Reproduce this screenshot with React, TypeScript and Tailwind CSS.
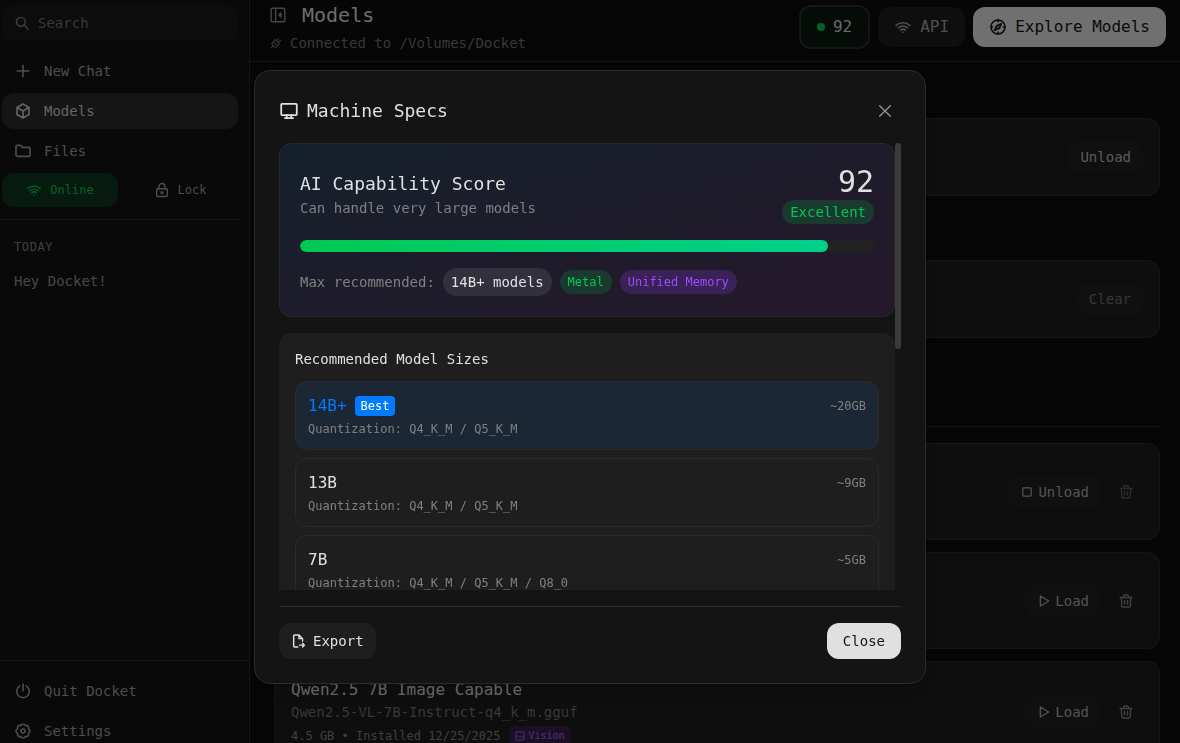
import type { ReactNode } from 'react';

type IconProps = { className?: string; children?: ReactNode };

function Icon({ className = 'size-4', children }: IconProps) {
  return (
    <svg
      viewBox="-1.5 -1.5 27 27"
      fill="none"
      stroke="currentColor"
      strokeWidth="2.4"
      strokeLinecap="round"
      strokeLinejoin="round"
      aria-hidden="true"
      className={`shrink-0 ${className}`}
    >
      {children}
    </svg>
  );
}

function WifiIcon({ className }: IconProps) {
  return (
    <Icon className={className}>
      <path d="M1.5 9.5c6-5.300 15-5.300 21 0" />
      <path d="M5 13.200c4-3.600 10-3.600 14 0" />
      <path d="M8.500 16.700c2-1.800 5-1.800 7 0" />
      <path d="M12 20h.01" />
    </Icon>
  );
}

function TrashIcon({ className }: IconProps) {
  return (
    <Icon className={className}>
      <path d="M2 6h20M4 6l1 14.500a1.500 1.500 0 0 0 1.500 1.500h11a1.500 1.500 0 0 0 1.500-1.500L20 6M8 6V3.500A1.500 1.500 0 0 1 9.500 2h5A1.500 1.500 0 0 1 16 3.500V6M9.500 11v6M14.500 11v6" />
    </Icon>
  );
}

function PlayIcon() {
  return (
    <Icon className="size-3.5">
      <path d="M5 2.500v19L21 12z" />
    </Icon>
  );
}

const navButton =
  'flex h-9 w-full shrink-0 items-center gap-3 rounded-xl px-3 text-sm text-[#9a9a9a]';

function Sidebar() {
  return (
    <aside className="flex w-[250px] shrink-0 flex-col border-r border-[#2a2a2a] bg-[#121212]">
      <div className="flex flex-col pt-[5px] pr-[11px] pl-0.5">
        <label className="flex h-9 items-center gap-2 rounded-xl bg-[#181818] px-3 text-[#808080]">
          <Icon>
            <circle cx="10" cy="10" r="7.500" />
            <path d="m15.500 15.500 7 7" />
          </Icon>
          <input
            type="text"
            aria-label="Search"
            placeholder="Search"
            className="w-full min-w-0 bg-transparent text-sm outline-none placeholder:text-[#707070]"
          />
        </label>

        <nav className="mt-3 flex flex-col gap-1">
          <button type="button" className={navButton}>
            <Icon className="size-[18px]">
              <path d="M12 3.500v17M3.500 12h17" />
            </Icon>
            New Chat
          </button>
          <button type="button" className={`${navButton} bg-[#2a2a2a] text-[#c8c8c8]`}>
            <Icon className="size-[18px]">
              <path d="m12 1.500 9 5.200v10.600L12 22.500l-9-5.200V6.700zM3 6.700l9 5.300 9-5.300M12 12v10.500" />
            </Icon>
            Models
          </button>
          <button type="button" className={navButton}>
            <Icon className="size-[18px]">
              <path d="M1.500 5A1.500 1.500 0 0 1 3 3.500h5.500L11.500 6.500H21A1.500 1.500 0 0 1 22.500 8v10.500A1.500 1.500 0 0 1 21 20H3a1.500 1.500 0 0 1-1.500-1.500z" />
            </Icon>
            Files
          </button>
        </nav>

        <div className="mt-1 flex gap-1">
          <button
            type="button"
            className="flex h-[34px] flex-1 items-center justify-center gap-2 rounded-xl bg-[#0d3520] text-xs text-[#00c950]"
          >
            <WifiIcon />
            Online
          </button>
          <button
            type="button"
            className="flex h-[34px] flex-1 items-center justify-center gap-2 rounded-xl text-xs text-[#9a9a9a]"
          >
            <Icon>
              <rect x="3" y="10" width="18" height="13" rx="2" />
              <path d="M7 10V6a5 5 0 0 1 10 0v4" />
              <circle cx="12" cy="16.500" r="1.500" />
            </Icon>
            Lock
          </button>
        </div>

        <div className="mt-3 border-t border-[#2a2a2a]" />
        <h2 className="mt-[19px] px-3 text-xs tracking-wider text-[#808080]">TODAY</h2>
        <a href="#chat" className="mt-4 px-3 text-sm text-[#909090]">
          Hey Docket!
        </a>
      </div>

      <div className="mt-auto -mb-1.5 flex flex-col gap-1 border-t border-[#2a2a2a] pt-3 pl-0.5">
        <button type="button" className={navButton}>
          <Icon className="size-[18px]">
            <path d="M12 1.500V12M7 4.500a9.500 9.500 0 1 0 10 0" />
          </Icon>
          Quit Docket
        </button>
        <button type="button" className={navButton}>
          <Icon className="size-[18px]">
            <path d="M15.400 3.900A3.600 3.600 0 0 1 20.100 8.600A3.600 3.600 0 0 1 20.100 15.400A3.600 3.600 0 0 1 15.400 20.100A3.600 3.600 0 0 1 8.600 20.100A3.600 3.600 0 0 1 3.900 15.400A3.600 3.600 0 0 1 3.900 8.600A3.600 3.600 0 0 1 8.600 3.900A3.600 3.600 0 0 1 15.400 3.900z" />
            <circle cx="12" cy="12" r="3" />
          </Icon>
          Settings
        </button>
      </div>
    </aside>
  );
}

function Header() {
  return (
    <header className="flex shrink-0 items-center justify-between border-b border-[#2a2a2a] pt-px pr-3.5 pb-2 pl-5">
      <div>
        <div className="flex items-center gap-4">
          <button type="button" aria-label="Collapse sidebar" className="text-[#8a8a8a]">
            <Icon className="size-4">
              <rect x=".5" y=".5" width="23" height="23" rx="2" />
              <path d="M8 .5v23" />
              <path d="M17 8.500v7L13.500 12z" fill="currentColor" />
            </Icon>
          </button>
          <h1 className="text-xl text-[#d8d8d8]">Models</h1>
        </div>
        <p className="mt-1 flex items-center gap-2 text-sm text-[#707070]">
          <Icon className="size-3">
            <path d="M1 23l5.500-5.500M6 9l9 9-1.500 1.500a5 5 0 0 1-7 0l-2-2a5 5 0 0 1 0-7zM6 9l4.500-4.500L19.500 13.500 15 18M13 7l5-5M17 11l5-5" />
          </Icon>
          Connected to /Volumes/Docket
        </p>
      </div>

      <div className="flex items-center gap-2">
        <button
          type="button"
          className="flex h-11 items-center gap-2 rounded-xl border-2 border-[#2a2a2a] bg-[#0a180f] px-4 text-[#d0d0d0]"
        >
          <span className="size-2 rounded-full bg-[#00c950]" />
          92
        </button>
        <button
          type="button"
          className="flex h-10 items-center gap-2 rounded-xl bg-[#1c1c1c] px-4 text-[#a0a0a0]"
        >
          <WifiIcon className="size-[18px]" />
          API
        </button>
        <button
          type="button"
          className="flex h-10 items-center gap-2 rounded-xl bg-[#e0e0e0] px-4 text-[#141414]"
        >
          <Icon className="size-[18px]">
            <circle cx="12" cy="12" r="10.500" />
            <path d="m17 7-3 7-7 3 3-7zM12 1.500v2.500M12 20v2.500M1.500 12H4M20 12h2.500M12 12h.01" />
          </Icon>
          Explore Models
        </button>
      </div>
    </header>
  );
}

const card =
  'flex shrink-0 items-center justify-end gap-2 rounded-xl border border-[#2a2a2a] bg-[#1c1c1c] px-4';
const cardButton = 'flex h-8 items-center gap-1 rounded-xl bg-[#202020] px-3 text-sm';

function DeleteButton({ disabled = false }: { disabled?: boolean }) {
  return (
    <button
      type="button"
      aria-label="Delete model"
      disabled={disabled}
      className="flex h-8 w-[34px] items-center justify-center text-[#808080] disabled:opacity-60"
    >
      <TrashIcon />
    </button>
  );
}

function ModelList() {
  return (
    <main className="flex min-h-0 flex-1 flex-col overflow-hidden pt-14 pr-5 pl-6">
      <section className={`${card} h-[78px]`}>
        <button type="button" className={`${cardButton} text-[#b8b8b8]`}>
          Unload
        </button>
      </section>
      <section className={`${card} mt-16 h-[78px]`}>
        <button type="button" disabled className={`${cardButton} text-[#707070]`}>
          Clear
        </button>
      </section>

      <div className="mt-[88px] flex shrink-0 flex-col gap-3 border-t border-[#2a2a2a] pt-4">
        <section className={`${card} h-[97px]`}>
          <button type="button" className={`${cardButton} text-[#a8a8a8]`}>
            <Icon className="size-3.5">
              <rect x="4" y="4" width="16" height="16" rx="1.500" />
            </Icon>
            Unload
          </button>
          <DeleteButton disabled />
        </section>
        <section className={`${card} h-[97px]`}>
          <button type="button" className={`${cardButton} text-[#a8a8a8]`}>
            <PlayIcon />
            Load
          </button>
          <DeleteButton />
        </section>
        <section className={`${card} py-4`}>
          <div className="min-w-0 flex-1">
            <h3 className="text-base text-[#d0d0d0]">Qwen2.5 7B Image Capable</h3>
            <p className="text-sm text-[#707070]">Qwen2.5-VL-7B-Instruct-q4_k_m.gguf</p>
            <div className="mt-1 flex h-5 items-center gap-2 text-xs text-[#808080]">
              4.5 GB • Installed 12/25/2025
              <span className="flex h-5 items-center gap-1 rounded-sm bg-[#341f48] px-1.5 text-[10px] text-[#a864f0]">
                <Icon className="size-2.5">
                  <rect x="1" y="1" width="22" height="22" rx="2" />
                  <path d="m1 15 6-4 5 5 4-3 6 5M16 7h.01" />
                </Icon>
                Vision
              </span>
            </div>
          </div>
          <button type="button" className={`${cardButton} text-[#a8a8a8]`}>
            <PlayIcon />
            Load
          </button>
          <DeleteButton />
        </section>
      </div>
    </main>
  );
}

const sizes = [
  { name: '14B+', quantization: 'Q4_K_M / Q5_K_M', memory: '~20GB', best: true },
  { name: '13B', quantization: 'Q4_K_M / Q5_K_M', memory: '~9GB', best: false },
  { name: '7B', quantization: 'Q4_K_M / Q5_K_M / Q8_0', memory: '~5GB', best: false },
];

function ScoreCard({ score }: { score: number }) {
  return (
    <section className="rounded-xl border border-[#2a2a2a] bg-linear-to-br from-[#14212c] via-[#1e1c2a] to-[#25182a] p-5">
      <div className="flex items-center justify-between">
        <div>
          <h3 className="text-lg text-[#e0e0e0]">AI Capability Score</h3>
          <p className="text-sm text-[#808080]">Can handle very large models</p>
        </div>
        <div className="flex flex-col items-end">
          <span className="text-3xl font-medium text-[#e0e0e0]">{score}</span>
          <span className="rounded-full bg-[#1a3a30] px-2 py-0.5 text-sm text-[#00c950]">
            Excellent
          </span>
        </div>
      </div>
      <div className="mt-4 h-3 overflow-hidden rounded-full bg-[#222]">
        <div
          className="h-full rounded-full bg-linear-to-r from-[#00c950] to-[#00d08a]"
          style={{ width: `${score}%` }}
        />
      </div>
      <div className="mt-4 flex items-center gap-2">
        <span className="text-sm text-[#808080]">Max recommended:</span>
        <span className="rounded-full bg-[#32303d] px-2 py-1 text-sm text-[#e0e0e0]">
          14B+ models
        </span>
        <span className="rounded-full bg-[#1a3a30] px-2 py-1 text-xs text-[#00c950]">Metal</span>
        <span className="rounded-full bg-[#3a2257] px-2 py-1 text-xs text-[#9b4dff]">
          Unified Memory
        </span>
      </div>
    </section>
  );
}

function MachineSpecs() {
  return (
    <div className="fixed inset-0 flex items-center justify-center bg-black/50 pt-[11px]">
      <div
        role="dialog"
        aria-labelledby="specs-title"
        className="flex h-[calc(100vh-129px)] w-full max-w-2xl flex-col rounded-2xl border border-[#2c2c2c] bg-[#141414] p-6 shadow-lg"
      >
        <div className="flex h-8 shrink-0 items-center justify-between">
          <h2 id="specs-title" className="flex items-center gap-2 text-lg text-[#e0e0e0]">
            <Icon className="size-5">
              <rect x="1.500" y="2.500" width="21" height="15" rx="1" />
              <path d="M9 17.500v4M15 17.500v4M6.500 21.500h11" />
            </Icon>
            Machine Specs
          </h2>
          <button
            type="button"
            aria-label="Close dialog"
            className="flex size-8 items-center justify-center text-[#909090]"
          >
            <Icon className="size-4">
              <path d="m3 3 18 18M21 3 3 21" />
            </Icon>
          </button>
        </div>

        <div className="mt-4 flex min-h-0 flex-1">
          <div className="flex min-w-0 flex-1 flex-col gap-4 overflow-y-auto [scrollbar-width:none]">
            <ScoreCard score={92} />
            <section className="rounded-xl bg-[#1e1e1e] p-4">
              <h3 className="text-sm text-[#e0e0e0]">Recommended Model Sizes</h3>
              <ul className="mt-3 flex flex-col gap-2">
                {sizes.map((size) => (
                  <li
                    key={size.name}
                    className={`rounded-xl border border-[#2a2a2a] p-3 ${size.best ? 'bg-[#1b2735]' : ''}`}
                  >
                    <div className="flex h-6 items-center gap-2">
                      <span className={size.best ? 'text-[#007bff]' : 'text-[#e0e0e0]'}>
                        {size.name}
                      </span>
                      {size.best && (
                        <span className="rounded-sm bg-[#007bff] px-1.5 py-0.5 text-xs text-white">
                          Best
                        </span>
                      )}
                      <span className="ml-auto text-xs text-[#808080]">{size.memory}</span>
                    </div>
                    <p className="mt-[3px] text-xs text-[#808080]">
                      Quantization: {size.quantization}
                    </p>
                  </li>
                ))}
              </ul>
            </section>
          </div>
          <div aria-hidden="true" className="w-1.5 shrink-0">
            <div className="h-[46%] rounded-full bg-[#3a3a3a]" />
          </div>
        </div>

        <div className="mt-4 flex shrink-0 items-center justify-between border-t border-[#2c2c2c] pt-4">
          <button
            type="button"
            className="flex h-9 items-center gap-1.5 rounded-xl bg-[#1e1e1e] px-3 text-sm text-[#e0e0e0]"
          >
            <Icon>
              <path d="M10 22H4.500A1.500 1.500 0 0 1 3 20.500v-17A1.500 1.500 0 0 1 4.500 2H12l6 6v4M12 2v6h6M13 19h8M18 16l3 3-3 3" />
            </Icon>
            Export
          </button>
          <button
            type="button"
            className="h-9 rounded-xl bg-[#e0e0e0] px-4 text-sm text-[#141414]"
          >
            Close
          </button>
        </div>
      </div>
    </div>
  );
}

export default function App() {
  return (
    <div className="flex h-screen overflow-hidden bg-[#0c0c0c] font-['DejaVu_Sans_Mono',monospace]">
      <Sidebar />
      <div className="flex min-w-0 flex-1 flex-col">
        <Header />
        <ModelList />
      </div>
      <MachineSpecs />
    </div>
  );
}
